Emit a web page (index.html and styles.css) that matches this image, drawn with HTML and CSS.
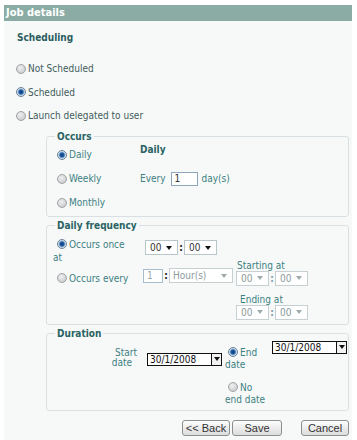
FILE: index.html
```html
<!DOCTYPE html>
<html lang="en">
<head>
    <meta charset="UTF-8">
    <meta name="viewport" content="width=device-width, initial-scale=1.0">
    <title>Job details</title>
    <link rel="stylesheet" href="styles.css">
</head>
<body>
    <div class="panel">
        <div class="panel-head">Job details</div>
        <div class="panel-body">
            <h2 class="section-title">Scheduling</h2>
            <div class="mode-list">
                <label class="choice"><span class="radio"></span>Not Scheduled</label>
                <label class="choice"><span class="radio checked"></span>Scheduled</label>
                <label class="choice"><span class="radio"></span>Launch delegated to user</label>
            </div>

            <fieldset class="group">
                <legend>Occurs</legend>
                <div class="occurs-grid">
                    <label class="choice sub occurs-opt"><span class="radio checked"></span>Daily</label>
                    <label class="choice sub occurs-opt"><span class="radio"></span>Weekly</label>
                    <label class="choice sub occurs-opt"><span class="radio"></span>Monthly</label>
                    <div class="detail-title">Daily</div>
                    <div class="every-row">Every <span class="textbox">1</span> day(s)</div>
                </div>
            </fieldset>

            <fieldset class="group">
                <legend>Daily frequency</legend>
                <div class="freq-grid">
                    <label class="wrap-choice once-label"><span class="radio checked"></span>Occurs once<br>at</label>
                    <div class="time-pair once-time">
                        <span class="dropdown"><span>00</span><span class="caret"></span></span>
                        <span class="colon">:</span>
                        <span class="dropdown"><span>00</span><span class="caret"></span></span>
                    </div>

                    <label class="wrap-choice every-label"><span class="radio"></span>Occurs every</label>
                    <div class="time-pair every-time">
                        <span class="textbox disabled">1</span>
                        <span class="colon">:</span>
                        <span class="dropdown disabled wide"><span>Hour(s)</span><span class="caret"></span></span>
                    </div>
                    <div class="range-block start-block">
                        <div class="range-title">Starting at</div>
                        <div class="time-pair">
                            <span class="dropdown disabled"><span>00</span><span class="caret"></span></span>
                            <span class="colon">:</span>
                            <span class="dropdown disabled"><span>00</span><span class="caret"></span></span>
                        </div>
                    </div>
                    <div class="range-block end-block">
                        <div class="range-title">Ending at</div>
                        <div class="time-pair">
                            <span class="dropdown disabled"><span>00</span><span class="caret"></span></span>
                            <span class="colon">:</span>
                            <span class="dropdown disabled"><span>00</span><span class="caret"></span></span>
                        </div>
                    </div>
                </div>
            </fieldset>

            <fieldset class="group">
                <legend>Duration</legend>
                <div class="duration-grid">
                    <div class="start-label">
                        <span class="line-a">Start</span>
                        <span class="line-b">date</span>
                    </div>
                    <div class="datebox start-date"><span>30/1/2008</span><span class="date-btn"><span class="caret"></span></span></div>
                    <label class="wrap-choice end-choice"><span class="radio checked"></span>End<br>date</label>
                    <div class="datebox end-date"><span>30/1/2008</span><span class="date-btn"><span class="caret"></span></span></div>
                    <label class="wrap-choice noend-choice"><span class="radio"></span>No<br>end date</label>
                </div>
            </fieldset>

            <div class="actions">
                <button class="btn">&lt;&lt; Back</button>
                <button class="btn btn-save">Save</button>
                <button class="btn btn-cancel">Cancel</button>
            </div>
        </div>
    </div>
</body>
</html>
```

FILE: styles.css
```css
body {
    margin: 0;
    background-color: #fff;
    font-family: "DejaVu Sans Condensed", "DejaVu Sans", sans-serif;
    font-size: 10px;
    color: #435c5b;
}

.panel {
    width: 348px;
    margin: 5px 0 0 4px;
    padding-bottom: 5px;
    background-color: #f7f9f9;
    border-bottom: 1px solid #e4e9e9;
}

.panel-head {
    height: 16px;
    line-height: 16px;
    padding-left: 2px;
    background-color: #8aaca4;
    color: #fff;
    font-weight: bold;
    font-size: 11px;
}

.panel-body {
    padding: 0 3px 0 12px;
}

.section-title {
    margin: 10px 0 0 1px;
    font-size: 10px;
    line-height: 14px;
    font-weight: bold;
    color: #2b5e5e;
}

.mode-list {
    display: flex;
    flex-direction: column;
    margin-top: 12px;
}

.choice {
    display: flex;
    align-items: center;
    height: 23.5px;
}

.radio {
    display: inline-block;
    flex: none;
    width: 10px;
    height: 10px;
    box-sizing: border-box;
    margin-right: 2px;
    border-radius: 50%;
    border: 1px solid #9ea3a6;
    background: radial-gradient(circle at 40% 35%, #f0f0f0 0, #d4d5d6 60%, #bfc1c3 100%);
}

.radio.checked {
    border-color: #6f8295;
    background: radial-gradient(circle, #0d3b78 0, #1f5aa0 2px, #8fb4d8 3px, #e6eef5 4px);
}

/* fieldset groups */

.group {
    margin: 3px 0 0 30px;
    padding: 0 0 0 8px;
    border: 1px solid #d9e0e3;
    border-radius: 3px;
}

.group legend {
    padding: 0 2px;
    line-height: 12px;
    font-weight: bold;
    color: #2a6363;
}

.sub,
.wrap-choice,
.detail-title,
.every-row,
.range-title,
.start-label {
    color: #3c8080;
}

.occurs-grid {
    display: grid;
    grid-template-columns: 85px 1fr;
    grid-template-rows: repeat(3, 24px);
    padding-bottom: 1px;
}

.occurs-opt {
    grid-column: 1;
    height: 24px;
    padding-left: 2px;
}

.detail-title {
    grid-column: 2;
    grid-row: 1;
    margin-top: 1px;
    font-weight: bold;
    color: #2a6363;
}

.every-row {
    grid-column: 2;
    grid-row: 2;
    display: flex;
    align-items: center;
    gap: 4px;
}

.textbox {
    display: inline-block;
    box-sizing: border-box;
    width: 27px;
    height: 14px;
    line-height: 12px;
    padding-left: 3px;
    border: 1px solid #8da6bd;
    background-color: #fff;
    color: #333;
}

.every-row .textbox {
    margin-left: 1px;
}

.textbox.disabled {
    width: 20px;
    border-color: #a9bccb;
    color: #9aa8aa;
}

/* daily frequency */

.freq-grid {
    display: grid;
    grid-template-columns: 90px 93px 1fr;
    grid-template-rows: 28px 26px 34px;
    margin-left: -2px;
    padding-bottom: 4px;
}

.wrap-choice {
    display: block;
    line-height: 13px;
}

.wrap-choice .radio {
    margin-left: 4px;
    vertical-align: -1px;
}

.once-label {
    grid-column: 1;
    grid-row: 1;
    margin-top: 6px;
}

.once-time {
    grid-column: 2 / 4;
    grid-row: 1;
    margin: 4px 0 0 2px;
}

.every-label {
    grid-column: 1;
    grid-row: 2;
    margin-top: 12px;
}

.every-time {
    grid-column: 2;
    grid-row: 2;
    margin-top: 6px;
}

.range-block {
    grid-column: 3;
}

.start-block {
    grid-row: 2;
}

.end-block {
    grid-row: 3;
    margin-top: 8px;
}

.range-title {
    line-height: 11px;
    padding-left: 1px;
}

.end-block .range-title {
    padding-left: 4px;
}

.time-pair {
    display: flex;
    align-items: center;
}

.colon {
    width: 6px;
    text-align: center;
    font-weight: bold;
    color: #222;
}

.dropdown {
    display: inline-flex;
    align-items: center;
    justify-content: space-between;
    box-sizing: border-box;
    width: 33px;
    height: 15px;
    padding: 0 5px 0 4px;
    border: 1px solid #b9c6c9;
    background-color: #fff;
    color: #333;
}

.dropdown.wide {
    width: 64px;
    padding-left: 3px;
}

.dropdown.disabled {
    border-color: #c6d0d2;
    color: #8c9a9b;
}

.caret {
    width: 0;
    height: 0;
    border-left: 3px solid transparent;
    border-right: 3px solid transparent;
    border-top: 4px solid #111;
}

.dropdown.disabled .caret {
    border-top-color: #9eaaab;
}

.dropdown.disabled + .colon {
    color: #7f9eae;
}

/* duration */

.duration-grid {
    display: grid;
    grid-template-columns: 90px 78px 47px 1fr;
    grid-template-rows: 36px 30px;
    padding-bottom: 4px;
}

.start-label {
    grid-column: 1;
    grid-row: 1;
    margin-top: 8px;
    line-height: 10px;
    text-align: right;
}

.start-label span {
    display: block;
}

.line-a {
    padding-right: 8px;
}

.line-b {
    padding-right: 13px;
}

.datebox {
    display: flex;
    align-items: stretch;
    justify-content: space-between;
    box-sizing: border-box;
    width: 75px;
    height: 13px;
    margin-left: 2px;
    line-height: 11px;
    padding-left: 2px;
    border: 1px solid #111;
    background-color: #fff;
    color: #111;
}

.date-btn {
    display: flex;
    align-items: center;
    justify-content: center;
    width: 9px;
    border-left: 1px solid #111;
    background-color: #f2f2f2;
}

.start-date {
    grid-column: 2;
    grid-row: 1;
    margin-top: 13px;
}

.end-choice {
    grid-column: 3;
    grid-row: 1;
    margin-top: 7px;
    line-height: 12px;
    margin-left: 2px;
}

.end-choice .radio,
.noend-choice .radio {
    margin-left: 3px;
}

.end-date {
    grid-column: 4;
    grid-row: 1;
    margin-top: 1px;
}

.noend-choice {
    grid-column: 3 / 5;
    grid-row: 2;
    margin-top: 6px;
    line-height: 12px;
    margin-left: 2px;
}

/* buttons */

.actions {
    display: flex;
    justify-content: flex-end;
    margin-top: 9px;
}

.btn {
    box-sizing: border-box;
    width: 48px;
    height: 16px;
    padding: 0;
    border: 1px solid #8e8e8e;
    border-radius: 3px;
    background: linear-gradient(#fdfdfd, #dcdcdc);
    font-family: "Liberation Sans", Arial, sans-serif;
    font-size: 11px;
    color: #333;
}

.btn-save {
    width: 50px;
    margin-left: 2px;
}

.btn-cancel {
    margin-left: 19px;
}
```
